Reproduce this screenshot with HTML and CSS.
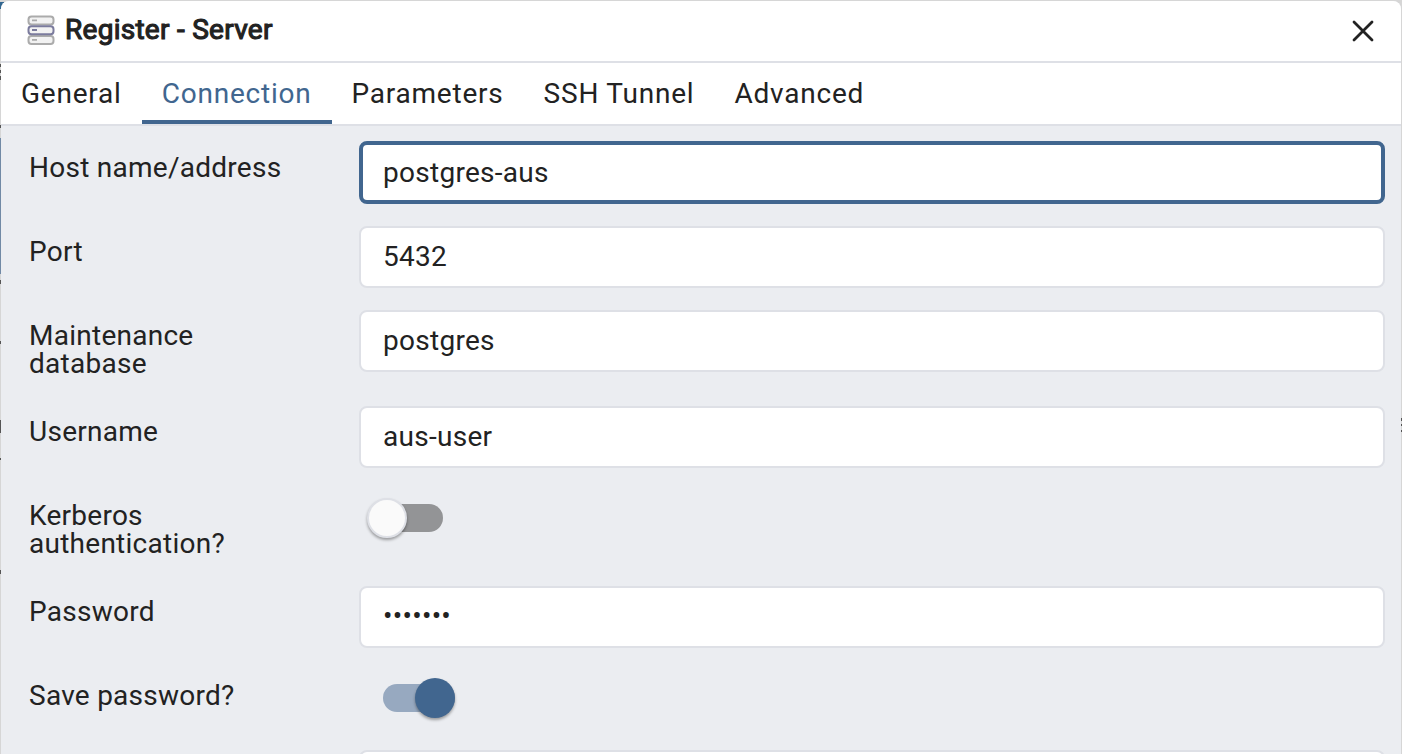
FILE: index.html
```html
<!DOCTYPE html>
<html lang="en">
<head>
<meta charset="utf-8">
<title>Register - Server</title>
<link rel="stylesheet" href="styles.css">
</head>
<body>
<div class="dialog">
  <header class="dialog-header">
    <svg class="server-icon" width="28" height="31" viewBox="0 0 28 31">
      <g fill="#f2f2f2" stroke="#ababab" stroke-width="2">
        <rect x="1.5" y="1.5" width="25" height="8" rx="3"/>
        <rect x="1.5" y="21" width="25" height="8" rx="3"/>
        <rect x="1.5" y="11.2" width="25" height="8" rx="3" stroke="#7b7b9d"/>
      </g>
      <g stroke-width="1.8"><path d="M5 5.3h5M5 24.8h5" stroke="#ababab"/><path d="M5 15h5" stroke="#7b7b9d"/></g>
    </svg>
    <h1 class="title">Register - Server</h1>
    <svg class="close" width="24" height="24" viewBox="0 0 24 24"><path d="M3 3l18 18M21 3L3 21" stroke="#222" stroke-width="2.8" stroke-linecap="round"/></svg>
  </header>
  <nav class="tabs">
    <a class="tab">General</a>
    <a class="tab active">Connection</a>
    <a class="tab">Parameters</a>
    <a class="tab">SSH Tunnel</a>
    <a class="tab">Advanced</a>
  </nav>
  <main class="form">
    <div class="row"><div class="label">Host name/address</div><div class="input focused">postgres-aus</div></div>
    <div class="row"><div class="label">Port</div><div class="input">5432</div></div>
    <div class="row"><div class="label">Maintenance database</div><div class="input">postgres</div></div>
    <div class="row"><div class="label">Username</div><div class="input">aus-user</div></div>
    <div class="row"><div class="label">Kerberos authentication?</div><div class="switch"><span class="thumb"></span></div></div>
    <div class="row"><div class="label">Password</div><div class="input password">•••••••</div></div>
    <div class="row short"><div class="label">Save password?</div><div class="switch on"><span class="thumb"></span></div></div>
    <div class="row"><div class="label"></div><div class="input"></div></div>
  </main>
</div>
</body>
</html>
```
FILE: styles.css
```css
* { box-sizing: border-box; }
html { overflow: hidden; }
body {
  margin: 0;
  height: 754px;
  overflow: hidden;
  padding: 1px 1px 0;
  font-family: Roboto, "Liberation Sans", sans-serif;
  font-size: 28px;
  color: #222;
  background:
    linear-gradient(#326690, #326690) 0 2px / 4px 7px no-repeat,
    linear-gradient(#555, #555) 0 64px / 1px 3px no-repeat,
    linear-gradient(#555, #555) 0 70px / 1px 3px no-repeat,
    linear-gradient(#555, #555) 0 76px / 1px 4px no-repeat,
    linear-gradient(#555, #555) 0 125px / 1px 3px no-repeat,
    linear-gradient(#7189a5, #7189a5) 0 138px / 1px 136px no-repeat,
    linear-gradient(#555, #555) 0 280px / 1px 4px no-repeat,
    linear-gradient(#555, #555) 0 341px / 1px 3px no-repeat,
    linear-gradient(#555, #555) 0 420px / 1px 13px no-repeat,
    linear-gradient(#555, #555) 0 458px / 1px 2px no-repeat,
    linear-gradient(#555, #555) 0 570px / 1px 4px no-repeat,
    linear-gradient(#555, #555) 1401px 418px / 1px 3px no-repeat,
    linear-gradient(#555, #555) 1401px 424px / 1px 2px no-repeat,
    linear-gradient(#555, #555) 1401px 430px / 1px 2px no-repeat,
    #d6d6d6;
}
.dialog {
  height: 753px;
  border-radius: 8px 8px 0 0;
  background: #ebedf1;
  overflow: hidden;
}
.dialog-header {
  display: flex;
  align-items: center;
  height: 62px;
  padding: 0 26px;
  background: #fff;
  border-bottom: 2px solid #dee0e6;
}
.server-icon { margin-bottom: 2px; }
.title {
  flex: 1;
  margin: 0 0 3px 10px;
  font-size: 28px;
  font-weight: 400;
  line-height: 32px;
  letter-spacing: 0.27px;
  -webkit-text-stroke: 1.1px #222;
}
.tabs {
  display: flex;
  height: 63px;
  background: #fff;
  border-bottom: 2px solid #dee0e6;
}
.tab {
  height: 61px;
  padding: 0 20px;
  line-height: 61px;
  letter-spacing: 0.78px;
}
.tab.active {
  color: #41668f;
  border-bottom: 4px solid #41668f;
}
.form {
  display: flex;
  flex-direction: column;
  gap: 22px;
  padding: 16px 16px 0 28px;
}
.row {
  display: grid;
  grid-template-columns: 330px 1fr;
  align-items: start;
  min-height: 62px;
}
.row.short { min-height: 58px; }
.label {
  padding: 12px 80px 6px 0;
  line-height: 28px;
  letter-spacing: 0.26px;
}
.row:first-child .label { padding-right: 0; }
.input {
  height: 62px;
  padding: 0 22px;
  line-height: 58px;
  letter-spacing: 0.28px;
  background: #fff;
  border: 2px solid #dee0e6;
  border-radius: 8px;
}
.input.focused {
  height: 63px;
  margin: -1px 0 0;
  padding: 0 20px;
  line-height: 56px;
  border: 4px solid #41668f;
}
.input.password { line-height: 56px; }
.switch {
  display: flex;
  align-items: center;
  width: 72px;
  height: 28px;
  margin: 14px 0 0 12px;
  border-radius: 14px;
  background: #939496;
}
.thumb {
  width: 40px;
  height: 40px;
  flex: none;
  margin-left: -4px;
  border: 2px solid #dee0e6;
  border-radius: 50%;
  background: #fafafa;
  box-shadow: 0 2px 3px rgba(0, 0, 0, 0.35);
}
.switch.on { margin-left: 24px; background: #97a9c0; }
.switch.on .thumb { margin-left: 32px; background: #41668f; border: 0; }
```
